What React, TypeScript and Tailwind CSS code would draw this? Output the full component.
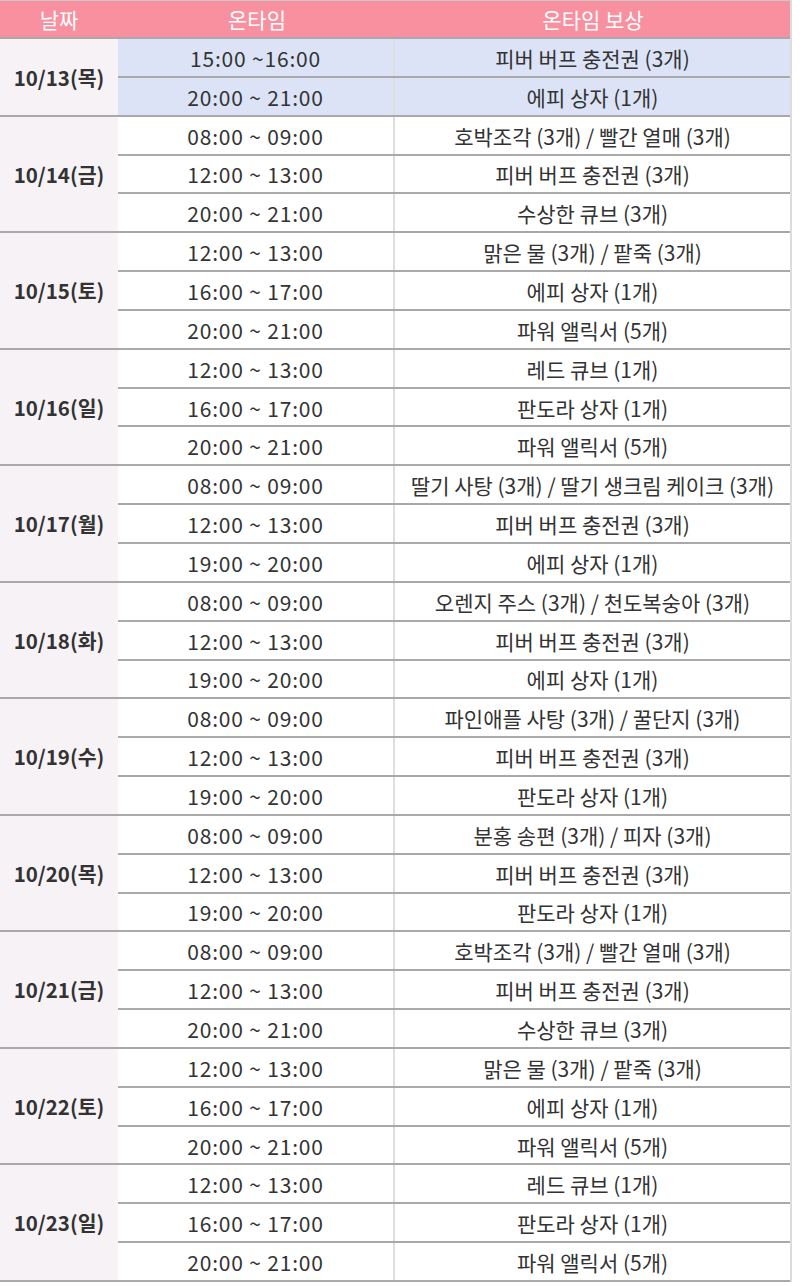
import React from 'react';

type Slot = { time: string; reward: string };
type Day = { date: string; slots: Slot[]; current?: boolean };

const days: Day[] = [
  {
    date: '10/13(목)',
    current: true,
    slots: [
      { time: '15:00 ~16:00', reward: '피버 버프 충전권 (3개)' },
      { time: '20:00 ~ 21:00', reward: '에피 상자 (1개)' },
    ],
  },
  {
    date: '10/14(금)',
    slots: [
      { time: '08:00 ~ 09:00', reward: '호박조각 (3개) / 빨간 열매 (3개)' },
      { time: '12:00 ~ 13:00', reward: '피버 버프 충전권 (3개)' },
      { time: '20:00 ~ 21:00', reward: '수상한 큐브 (3개)' },
    ],
  },
  {
    date: '10/15(토)',
    slots: [
      { time: '12:00 ~ 13:00', reward: '맑은 물 (3개) / 팥죽 (3개)' },
      { time: '16:00 ~ 17:00', reward: '에피 상자 (1개)' },
      { time: '20:00 ~ 21:00', reward: '파워 앨릭서 (5개)' },
    ],
  },
  {
    date: '10/16(일)',
    slots: [
      { time: '12:00 ~ 13:00', reward: '레드 큐브 (1개)' },
      { time: '16:00 ~ 17:00', reward: '판도라 상자 (1개)' },
      { time: '20:00 ~ 21:00', reward: '파워 앨릭서 (5개)' },
    ],
  },
  {
    date: '10/17(월)',
    slots: [
      { time: '08:00 ~ 09:00', reward: '딸기 사탕 (3개) / 딸기 생크림 케이크 (3개)' },
      { time: '12:00 ~ 13:00', reward: '피버 버프 충전권 (3개)' },
      { time: '19:00 ~ 20:00', reward: '에피 상자 (1개)' },
    ],
  },
  {
    date: '10/18(화)',
    slots: [
      { time: '08:00 ~ 09:00', reward: '오렌지 주스 (3개) / 천도복숭아 (3개)' },
      { time: '12:00 ~ 13:00', reward: '피버 버프 충전권 (3개)' },
      { time: '19:00 ~ 20:00', reward: '에피 상자 (1개)' },
    ],
  },
  {
    date: '10/19(수)',
    slots: [
      { time: '08:00 ~ 09:00', reward: '파인애플 사탕 (3개) / 꿀단지 (3개)' },
      { time: '12:00 ~ 13:00', reward: '피버 버프 충전권 (3개)' },
      { time: '19:00 ~ 20:00', reward: '판도라 상자 (1개)' },
    ],
  },
  {
    date: '10/20(목)',
    slots: [
      { time: '08:00 ~ 09:00', reward: '분홍 송편 (3개) / 피자 (3개)' },
      { time: '12:00 ~ 13:00', reward: '피버 버프 충전권 (3개)' },
      { time: '19:00 ~ 20:00', reward: '판도라 상자 (1개)' },
    ],
  },
  {
    date: '10/21(금)',
    slots: [
      { time: '08:00 ~ 09:00', reward: '호박조각 (3개) / 빨간 열매 (3개)' },
      { time: '12:00 ~ 13:00', reward: '피버 버프 충전권 (3개)' },
      { time: '20:00 ~ 21:00', reward: '수상한 큐브 (3개)' },
    ],
  },
  {
    date: '10/22(토)',
    slots: [
      { time: '12:00 ~ 13:00', reward: '맑은 물 (3개) / 팥죽 (3개)' },
      { time: '16:00 ~ 17:00', reward: '에피 상자 (1개)' },
      { time: '20:00 ~ 21:00', reward: '파워 앨릭서 (5개)' },
    ],
  },
  {
    date: '10/23(일)',
    slots: [
      { time: '12:00 ~ 13:00', reward: '레드 큐브 (1개)' },
      { time: '16:00 ~ 17:00', reward: '판도라 상자 (1개)' },
      { time: '20:00 ~ 21:00', reward: '파워 앨릭서 (5개)' },
    ],
  },
];

export default function App() {
  return (
    <div
      className="w-[800px] bg-white text-[21px] leading-none text-[#333]"
      style={{ fontFamily: '"Noto Sans CJK KR", "Noto Sans", sans-serif' }}
    >
      <div className="w-[792px] border-r-2 border-[#dcdcdc]">
        {/* Header */}
        <div className="flex h-[39px] border-t border-[#c8c8c8] border-b-2 border-b-[#a9a9a9] bg-[#f8909f] text-white">
          <div className="flex w-[118px] items-center justify-center">날짜</div>
          <div className="flex w-[278px] items-center justify-center">온타임</div>
          <div className="flex flex-1 items-center justify-center">온타임 보상</div>
        </div>

        {days.map((day) => (
          <div key={day.date} className="flex border-b-2 border-[#a9a9a9]">
            <div className="flex w-[118px] items-center justify-center bg-[#f7f2f6] text-[20.5px] font-bold">
              {day.date}
            </div>
            <div className={`flex flex-1 flex-col ${day.current ? 'bg-[#dce3f7]' : 'bg-white'}`}>
              {day.slots.map((slot, i) => {
                const last = i === day.slots.length - 1;
                return (
                  <div
                    key={slot.time + i}
                    className={
                      last ? 'flex h-[36.85px]' : 'flex h-[38.85px] border-b-2 border-[#a9a9a9]'
                    }
                  >
                    <div className="flex w-[277px] items-center justify-center border-r-2 border-[#dedede] pt-[2px] tracking-[0.8px]">
                      {slot.time}
                    </div>
                    <div className="flex flex-1 items-center justify-center whitespace-nowrap pt-[2px]">
                      {slot.reward}
                    </div>
                  </div>
                );
              })}
            </div>
          </div>
        ))}
      </div>
    </div>
  );
}
